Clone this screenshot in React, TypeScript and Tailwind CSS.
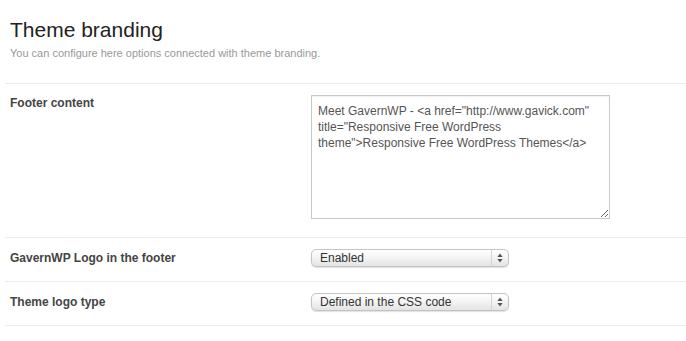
import React from "react";

function SelectBox({ value }: { value: string }) {
  return (
    <div className="flex h-[18px] w-[198px] items-stretch rounded-[5px] border border-[#c4c4c4] bg-gradient-to-b from-[#ffffff] via-[#f3f3f3] to-[#e4e4e4] shadow-[0_1px_1px_rgba(0,0,0,0.12)]">
      <div className="flex flex-1 items-center pl-[8px] text-[12px] leading-none text-[#333]">
        {value}
      </div>
      <div className="flex w-[17px] items-center justify-center border-l border-[#d4d4d4]">
        <svg width="6" height="10" viewBox="0 0 6 10">
          <path d="M3 0.5 L5.6 4 L0.4 4 Z" fill="#555" />
          <path d="M3 9.5 L5.6 6 L0.4 6 Z" fill="#555" />
        </svg>
      </div>
    </div>
  );
}

export default function App() {
  const rows = [
    { label: "GavernWP Logo in the footer", value: "Enabled" },
    { label: "Theme logo type", value: "Defined in the CSS code" },
  ];

  return (
    <div className="h-[341px] w-[686px] overflow-hidden bg-white font-['Liberation_Sans',Arial,sans-serif]">
      <div className="pl-[10px] pt-[17px]">
        <h1 className="text-[21px] leading-[26px] text-[#222]">Theme branding</h1>
        <p className="mt-[3px] text-[11px] leading-[14px] text-[#999]">
          You can configure here options connected with theme branding.
        </p>
      </div>

      <div className="ml-[5px] mt-[23px] border-t border-[#ececec]">
        <div className="flex border-b border-[#ececec] pb-[18px] pt-[11px]">
          <div className="w-[306px] pl-[5px] pt-[1px] text-[12px] font-bold leading-[14px] text-[#444]">
            Footer content
          </div>
          <textarea
            readOnly
            defaultValue={
              'Meet GavernWP - <a href="http://www.gavick.com" title="Responsive Free WordPress theme">Responsive Free WordPress Themes</a>'
            }
            className="h-[124px] w-[299px] resize border border-[#c9c9c9] px-[6px] pt-[7px] text-[12px] leading-[16px] text-[#555] shadow-[inset_0_1px_1px_rgba(0,0,0,0.06)] outline-none"
          />
        </div>

        {rows.map((r) => (
          <div key={r.label} className="flex h-[44px] items-start border-b border-[#ececec] pt-[11px]">
            <div className="w-[306px] pl-[5px] pt-[2px] text-[12px] font-bold leading-[14px] text-[#444]">
              {r.label}
            </div>
            <SelectBox value={r.value} />
          </div>
        ))}
      </div>
    </div>
  );
}
